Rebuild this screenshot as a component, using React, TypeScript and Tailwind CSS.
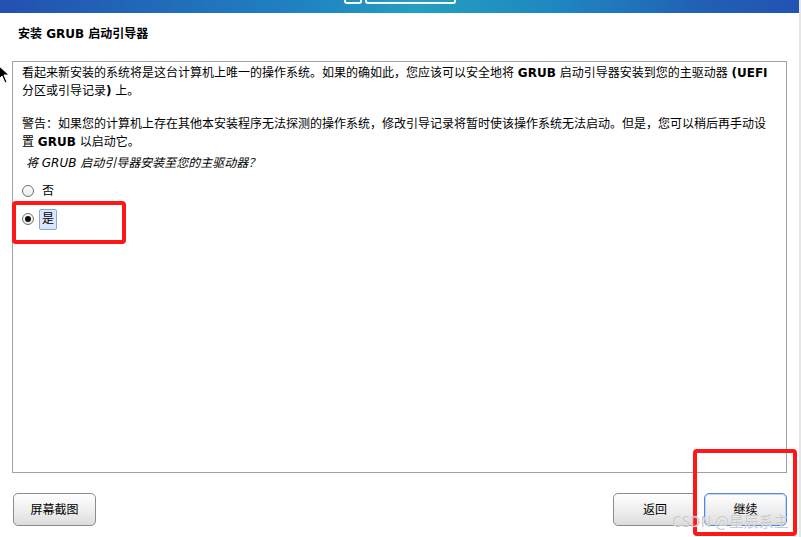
import React from 'react';

const Radio = ({ checked }: { checked?: boolean }) => (
    <span className="w-[12px] h-[12px] rounded-full border border-[#6f6f6f] bg-[linear-gradient(180deg,#ffffff,#e9e9e9)] flex items-center justify-center shrink-0">
        {checked && <span className="w-[6px] h-[6px] rounded-full bg-[#111]" />}
    </span>
);

const Button = ({ label, primary, className }: { label: string; primary?: boolean; className?: string }) => (
    <button
        className={
            "h-[33px] rounded-[5px] bg-[linear-gradient(180deg,#ffffff,#ececec_60%,#dcdcdc)] text-[12px] text-black flex items-center justify-center " +
            (primary
                ? "border border-[#4f88e0] shadow-[inset_0_0_0_1px_#c4d8f6] "
                : "border border-[#8c8c8c] ") +
            (className || "")
        }
    >
        {label}
    </button>
);

export default function App() {
    return (
        <div className="relative w-[801px] h-[537px] bg-white flex overflow-hidden font-['DejaVu_Sans','Noto_Sans_CJK_SC',sans-serif] text-black">
            <div className="flex-1 flex flex-col">
                {/* top banner */}
                <div className="h-[13px] shrink-0 bg-[linear-gradient(90deg,#2350b1,#1f86c2_40%,#23a0c0_52%,#1f86c0_70%,#2160b5_88%,#2352b3)] flex">
                    <div className="ml-[344px] w-[18px] h-[4px] border-2 border-t-0 border-white rounded-b-[3px]" />
                    <div className="ml-[3px] w-[91px] h-[4px] border-2 border-t-0 border-white rounded-b-[3px]" />
                </div>

                <div className="pt-[12px] pl-[18px] text-[12px] leading-[18px] font-bold">
                    安装 GRUB 启动引导器
                </div>

                {/* content box */}
                <div className="mt-[18px] mx-[12px] flex-1 border border-[#a3a3a3] pl-[9px] pt-[2px] text-[12px] leading-[18px]">
                    <p className="whitespace-nowrap">
                        看起来新安装的系统将是这台计算机上唯一的操作系统。如果的确如此，您应该可以安全地将 <b>GRUB</b> 启动引导器安装到您的主驱动器 <b>(UEFI</b>
                        <br />
                        分区或引导记录<b>)</b> 上。
                    </p>
                    <p className="mt-[15px] whitespace-nowrap">
                        警告：如果您的计算机上存在其他本安装程序无法探测的操作系统，修改引导记录将暂时使该操作系统无法启动。但是，您可以稍后再手动设
                        <br />
                        置 <b>GRUB</b> 以启动它。
                    </p>
                    <p className="mt-[3px] pl-[4px] italic whitespace-nowrap">将 GRUB 启动引导器安装至您的主驱动器？</p>

                    <div className="mt-[8px] h-[22px] flex items-center">
                        <Radio />
                        <span className="ml-[8px]">否</span>
                    </div>
                    <div className="mt-[6px] h-[22px] flex items-center">
                        <Radio checked />
                        <span className="ml-[5px] h-[21px] px-[2px] flex items-center bg-[#dae6fa] border border-[#86a6dc] rounded-[2px]">是</span>
                    </div>
                </div>

                {/* buttons */}
                <div className="mt-[20px] mb-[11px] h-[33px] shrink-0 flex px-[12px]">
                    <Button label="屏幕截图" className="ml-[1px] w-[83px]" />
                    <div className="flex-1" />
                    <Button label="返回" className="w-[84px]" />
                    <Button label="继续" primary className="ml-[7px] w-[83px]" />
                </div>
            </div>
            <div className="w-[2px] shrink-0 bg-[#e6e6e6]" />

            {/* mouse cursor */}
            <svg className="absolute left-[-3px] top-[64px]" width="14" height="20" viewBox="0 0 14 20">
                <path d="M1 1 L1 16 L5 12 L8 19 L10 18 L7 11 L12 11 Z" fill="#000" stroke="#fff" strokeWidth="1" />
            </svg>

            {/* annotation boxes */}
            <div className="absolute left-[12px] top-[201px] w-[114px] h-[43px] border-[4px] border-[#ff1616] rounded-[4px]" />
            <div className="absolute left-[693px] top-[449px] w-[104px] h-[87px] border-[4px] border-[#ff1616] rounded-[4px]" />

            {/* watermark */}
            <div className="absolute left-[672px] top-[511px] text-[15px] leading-[20px] text-[#c9c9c9] font-['Noto_Sans_CJK_SC',sans-serif] [text-shadow:0_0_1px_#ffffff] whitespace-nowrap">
                CSDN @星辰系主
            </div>
        </div>
    );
}
